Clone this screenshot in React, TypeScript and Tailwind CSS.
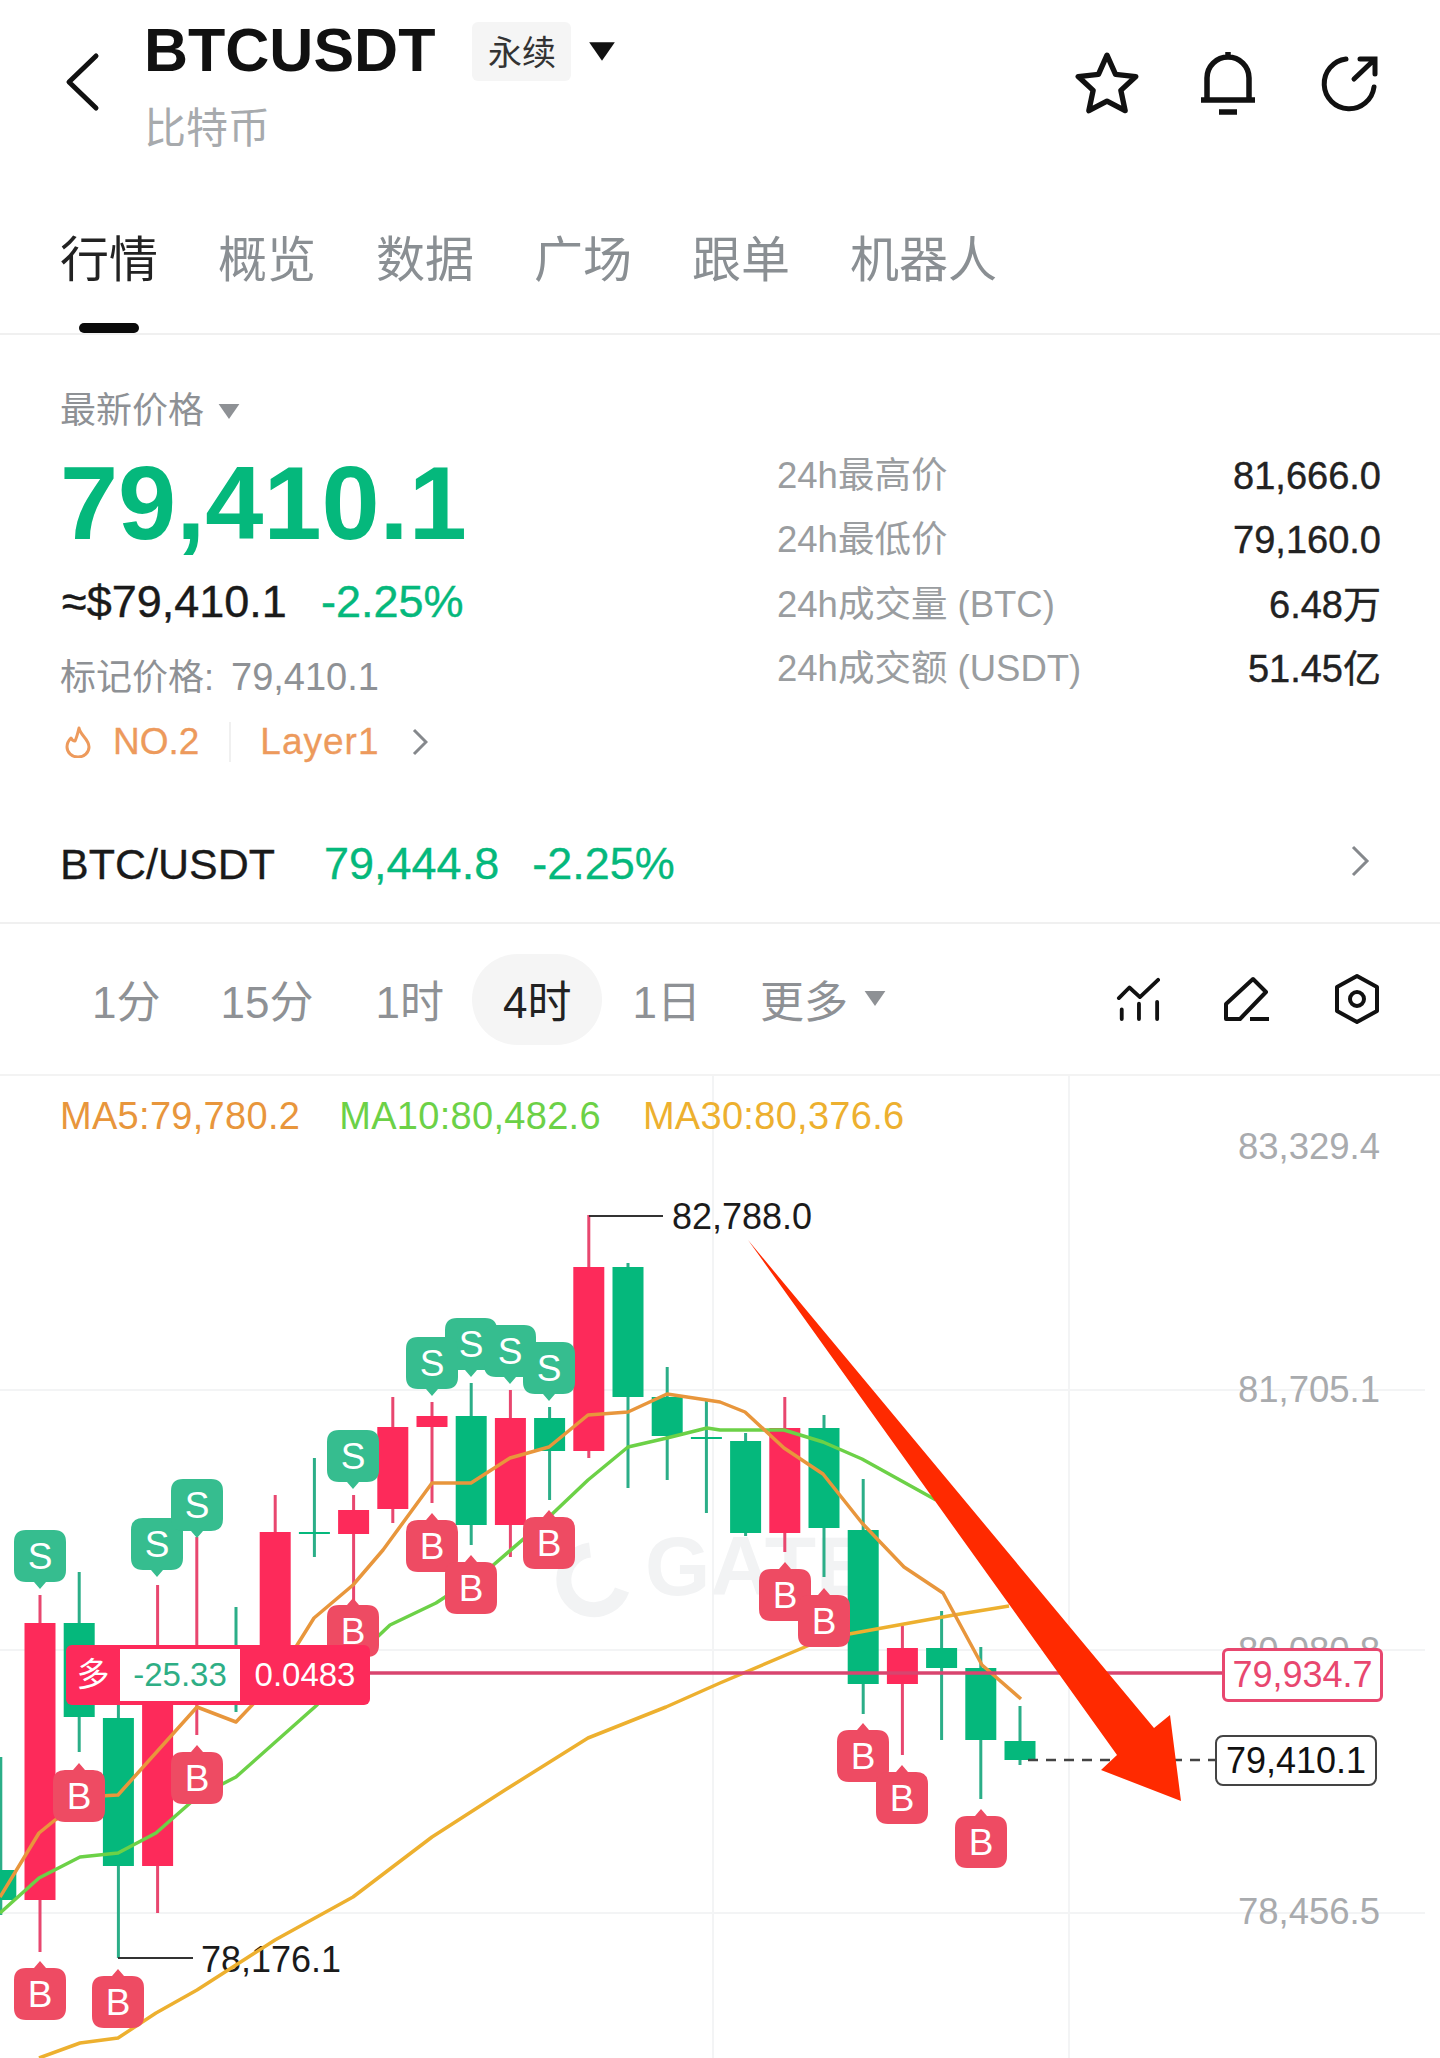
import React from 'react'

const GREEN = '#05B87C'
const RED = '#FD2A5A'
const WICK_GREEN = '#2BAE88'
const WICK_RED = '#E8476F'

// x = 40 + 39.2 * i, all y in page pixels
type Candle = { i: number; up: boolean; top: number; bottom: number; high: number; low: number }
const candles: Candle[] = [
  { i: -1, up: false, top: 1870, bottom: 1900, high: 1757, low: 1915 },
  { i: 0, up: true, top: 1623, bottom: 1900, high: 1595, low: 1952 },
  { i: 1, up: false, top: 1623, bottom: 1717, high: 1572, low: 1752 },
  { i: 2, up: false, top: 1718, bottom: 1866, high: 1660, low: 1958 },
  { i: 3, up: true, top: 1680, bottom: 1866, high: 1585, low: 1913 },
  { i: 4, up: true, top: 1660, bottom: 1690, high: 1537, low: 1735 },
  { i: 5, up: false, top: 1660, bottom: 1680, high: 1607, low: 1712 },
  { i: 6, up: true, top: 1532, bottom: 1680, high: 1495, low: 1690 },
  { i: 7, up: false, top: 1532, bottom: 1534, high: 1458, low: 1557 },
  { i: 8, up: true, top: 1510, bottom: 1534, high: 1495, low: 1603 },
  { i: 9, up: true, top: 1427, bottom: 1509, high: 1397, low: 1523 },
  { i: 10, up: true, top: 1416, bottom: 1427, high: 1402, low: 1503 },
  { i: 11, up: false, top: 1416, bottom: 1525, high: 1383, low: 1545 },
  { i: 12, up: true, top: 1418, bottom: 1525, high: 1390, low: 1557 },
  { i: 13, up: false, top: 1418, bottom: 1451, high: 1407, low: 1500 },
  { i: 14, up: true, top: 1267, bottom: 1451, high: 1215, low: 1458 },
  { i: 15, up: false, top: 1267, bottom: 1397, high: 1263, low: 1488 },
  { i: 16, up: false, top: 1397, bottom: 1436, high: 1367, low: 1480 },
  { i: 17, up: false, top: 1437, bottom: 1439, high: 1400, low: 1513 },
  { i: 18, up: false, top: 1441, bottom: 1533, high: 1433, low: 1536 },
  { i: 19, up: true, top: 1428, bottom: 1533, high: 1397, low: 1552 },
  { i: 20, up: false, top: 1428, bottom: 1528, high: 1415, low: 1577 },
  { i: 21, up: false, top: 1530, bottom: 1684, high: 1479, low: 1714 },
  { i: 22, up: true, top: 1648, bottom: 1684, high: 1626, low: 1755 },
  { i: 23, up: false, top: 1648, bottom: 1668, high: 1611, low: 1740 },
  { i: 24, up: false, top: 1668, bottom: 1740, high: 1647, low: 1799 },
  { i: 25, up: false, top: 1741, bottom: 1760, high: 1706, low: 1765 },
]

const sellTags = [
  { x: 40, top: 1530 },
  { x: 157, top: 1518 },
  { x: 197, top: 1479 },
  { x: 353, top: 1430 },
  { x: 471, top: 1318 },
  { x: 510, top: 1325 },
  { x: 432, top: 1337 },
  { x: 549, top: 1342 },
]

const buyTags = [
  { x: 40, top: 1968 },
  { x: 79, top: 1770 },
  { x: 118, top: 1976 },
  { x: 197, top: 1752 },
  { x: 353, top: 1605 },
  { x: 432, top: 1520 },
  { x: 471, top: 1562 },
  { x: 549, top: 1517 },
  { x: 785, top: 1569 },
  { x: 824, top: 1595 },
  { x: 863, top: 1730 },
  { x: 902, top: 1772 },
  { x: 981, top: 1816 },
]

const ma5 = '0,1897 39,1833 55,1820 100,1796 118,1795 197,1707 236,1722 257,1700 294,1650 314,1618 353,1585 383,1550 432,1483 471,1483 510,1458 549,1447 588,1415 628,1412 667,1394 707,1400 720,1402 745,1412 784,1448 823,1474 862,1523 904,1567 943,1593 982,1665 1021,1699'
const ma10 = '0,1913 39,1878 80,1857 118,1853 156,1833 197,1797 236,1777 317,1705 353,1660 390,1625 436,1603 491,1567 549,1517 588,1480 628,1447 667,1438 707,1428 720,1430 784,1430 823,1442 862,1459 936,1500'
const ma30 = '39,2058 80,2043 118,2038 156,2013 197,1990 275,1940 353,1897 432,1837 505,1790 588,1738 666,1707 720,1683 812,1644 849,1634 904,1624 954,1615 1009,1606'

function Tag({ x, top, kind }: { x: number; top: number; kind: 'S' | 'B' }) {
  const l = x - 26
  const r = x + 26
  const b = top + 52
  const d =
    kind === 'S'
      ? `M${l + 12} ${top} H${r - 12} Q${r} ${top} ${r} ${top + 12} V${b - 12} Q${r} ${b} ${r - 12} ${b} H${x + 6} L${x} ${b + 7} L${x - 6} ${b} H${l + 12} Q${l} ${b} ${l} ${b - 12} V${top + 12} Q${l} ${top} ${l + 12} ${top} Z`
      : `M${l + 12} ${top} H${x - 6} L${x} ${top - 7} L${x + 6} ${top} H${r - 12} Q${r} ${top} ${r} ${top + 12} V${b - 12} Q${r} ${b} ${r - 12} ${b} H${l + 12} Q${l} ${b} ${l} ${b - 12} V${top + 12} Q${l} ${top} ${l + 12} ${top} Z`
  return (
    <g>
      <path d={d} fill={kind === 'S' ? '#36BD8F' : '#EE4B63'} />
      <text x={x} y={top + 39} fontSize="37" fill="#fff" textAnchor="middle">
        {kind}
      </text>
    </g>
  )
}

function Triangle({ className }: { className: string }) {
  return (
    <svg viewBox="0 0 24 18" className={className}>
      <path d="M1 1 H23 L12 17 Z" fill="currentColor" />
    </svg>
  )
}

function Chart() {
  return (
    <svg viewBox="0 1076 1440 982" className="absolute inset-0 w-full h-full">
      {/* grid */}
      <g stroke="#F3F4F5" strokeWidth="2">
        <path d="M713 1076 V2058 M1069 1076 V2058" />
        <path d="M0 1390 H1425 M0 1650 H1425 M0 1913 H1425" />
      </g>

      {/* watermark */}
      <path d="M590 1550 A30 30 0 1 0 622 1590" fill="none" stroke="#F2F3F4" strokeWidth="15" />
      <text x="645" y="1595" fontSize="84" fontWeight="700" fill="#F2F3F4">
        GATE
      </text>

      {/* axis */}
      <g fontSize="36.5" fill="#A9ABAE" textAnchor="end">
        <text x="1380" y="1159">83,329.4</text>
        <text x="1380" y="1402">81,705.1</text>
        <text x="1380" y="1663">80,080.8</text>
        <text x="1380" y="1924">78,456.5</text>
      </g>

      {/* candles */}
      {candles.map((c) => {
        const x = 40 + 39.2 * c.i
        return (
          <g key={c.i}>
            <rect x={x - 1.5} y={c.high} width="3" height={c.low - c.high} fill={c.up ? WICK_RED : WICK_GREEN} />
            <rect x={x - 15.5} y={c.top} width="31" height={c.bottom - c.top} fill={c.up ? RED : GREEN} />
          </g>
        )
      })}

      {/* high / low markers */}
      <path d="M589 1216 H663" stroke="#333" strokeWidth="2" fill="none" />
      <path d="M118 1958 H193" stroke="#333" strokeWidth="2" fill="none" />
      <text x="672" y="1229" fontSize="36" fill="#1B1B1B">82,788.0</text>
      <text x="201" y="1972" fontSize="36" fill="#1B1B1B">78,176.1</text>

      {/* moving averages */}
      <g fill="none" strokeWidth="3.5" strokeLinejoin="round">
        <polyline points={ma30} stroke="#EDB02F" />
        <polyline points={ma10} stroke="#6CD147" />
        <polyline points={ma5} stroke="#E8963C" />
      </g>

      {sellTags.map((t) => (
        <Tag key={t.x} x={t.x} top={t.top} kind="S" />
      ))}
      {buyTags.map((t) => (
        <Tag key={t.x} x={t.x} top={t.top} kind="B" />
      ))}

      {/* position + last price lines */}
      <path d="M369 1673 H1222" stroke="#D8456F" strokeWidth="3.5" />
      <path d="M1028 1760 H1215" stroke="#444" strokeWidth="2.5" strokeDasharray="10 8" />

      {/* arrow annotation */}
      <polygon points="748,1240 1154,1728 1170,1715 1181,1801 1101,1770 1117,1755" fill="#FF2A00" />
    </svg>
  )
}

export default function App() {
  return (
    <div
      className="w-[1440px] h-[2058px] overflow-hidden bg-white text-[#222]"
      style={{ fontFamily: '"Liberation Sans", "Noto Sans CJK SC", sans-serif' }}
    >
      {/* top bar */}
      <header className="h-[180px] flex items-start">
        <svg viewBox="0 0 36 60" className="w-[36px] h-[60px] mt-[52px] ml-[64px] shrink-0">
          <path d="M32 4 L5 30 L32 56" fill="none" stroke="#111" strokeWidth="5" strokeLinecap="round" strokeLinejoin="round" />
        </svg>
        <div className="ml-[44px] mt-[20px]">
          <div className="flex items-start">
            <span className="text-[61px] leading-[60px] font-bold text-[#111]">BTCUSDT</span>
            <span className="ml-[37px] mt-[2px] w-[99px] h-[59px] rounded-[6px] bg-[#F5F5F5] text-[34px] leading-[62px] text-center text-[#333]">
              永续
            </span>
            <Triangle className="w-[28px] h-[21px] ml-[17px] mt-[21px] text-[#111]" />
          </div>
          <div className="text-[42px] leading-[50px] mt-[23px] text-[#A7AAAD]">比特币</div>
        </div>
        <div className="ml-auto mr-[61px] mt-[52px] flex gap-[60px]">
          <svg viewBox="0 0 60 60" className="w-[64px] h-[64px]">
            <path
              d="M30 3 L38 21 L57 23 L43 36 L47 55 L30 46 L13 55 L17 36 L3 23 L22 21 Z"
              fill="none"
              stroke="#111"
              strokeWidth="5"
              strokeLinejoin="round"
            />
          </svg>
          <svg viewBox="0 0 60 64" className="w-[60px] h-[64px] -ml-[1px]">
            <path
              d="M9 47 V26 A21 21 0 0 1 51 26 V47 M3 48 H57 M30 0 V6 M21 60 H39"
              fill="none"
              stroke="#111"
              strokeWidth="5.5"
            />
          </svg>
          <svg viewBox="0 0 60 60" className="w-[60px] h-[60px] ml-[1px] mt-[2px]">
            <path
              d="M27 5 A25 25 0 1 0 55 33 M35 25 L55 6 M41 5 H56 V20"
              fill="none"
              stroke="#111"
              strokeWidth="5"
              strokeLinecap="round"
            />
          </svg>
        </div>
      </header>

      {/* tabs */}
      <nav className="h-[155px] border-b-2 border-[#F0F0F0] relative flex pl-[60px] gap-[60px] pt-[51px] text-[49px] leading-[58px] text-[#8A8F93]">
        <span className="text-[#222]">行情</span>
        <span>概览</span>
        <span>数据</span>
        <span>广场</span>
        <span>跟单</span>
        <span>机器人</span>
        <div className="absolute left-[79px] bottom-0 w-[60px] h-[10px] rounded-[5px] bg-[#0A0A0A]" />
      </nav>

      {/* price block */}
      <section className="flex h-[430px]">
        <div className="w-[717px] pl-[60px] pt-[54px]">
          <div className="flex items-center text-[36px] leading-[44px] text-[#8E9195]">
            最新价格
            <Triangle className="w-[24px] h-[17px] ml-[13px] text-[#8E9195]" />
          </div>
          <div className="mt-[18px] text-[104.5px] leading-[104px] font-bold" style={{ color: GREEN }}>
            79,410.1
          </div>
          <div className="mt-[21px] flex text-[45px] leading-[52px] [-webkit-text-stroke:0.4px]">
            <span className="ml-[2px] text-[#1A1A1A]">≈$79,410.1</span>
            <span className="ml-[34px]" style={{ color: GREEN }}>
              -2.25%
            </span>
          </div>
          <div className="mt-[27px] flex items-baseline text-[36px] leading-[44px] text-[#8E9195]">
            标记价格:
            <span className="ml-[17px] text-[38px]">79,410.1</span>
          </div>
          <div className="mt-[20px] h-[44px] flex items-center text-[37px] text-[#ED9A5C] [-webkit-text-stroke:0.3px]">
            <svg viewBox="0 0 28 32" className="w-[28px] h-[32px] ml-[4px]">
              <path
                d="M15 2 C16 9 25 13 25 21 A11 10 0 0 1 3 21 C3 17 5 14 7 12 C8 14 9 15 11 15 C13 11 14 6 15 2 Z"
                fill="none"
                stroke="#ED9A5C"
                strokeWidth="3"
                strokeLinejoin="round"
              />
            </svg>
            <span className="ml-[21px]">NO.2</span>
            <span className="ml-[30px] w-[2px] h-[40px] bg-[#F0F0F0]" />
            <span className="ml-[29px] tracking-[1px]">Layer1</span>
            <svg viewBox="0 0 16 28" className="w-[16px] h-[28px] ml-[32px]">
              <path d="M2 2 L14 14 L2 26" fill="none" stroke="#85888C" strokeWidth="3" />
            </svg>
          </div>
        </div>
        <div className="pt-[109px] w-[604px] ml-[60px] flex flex-col text-[36.5px] leading-[64.4px]">
          {[
            ['24h最高价', '81,666.0'],
            ['24h最低价', '79,160.0'],
            ['24h成交量 (BTC)', '6.48万'],
            ['24h成交额 (USDT)', '51.45亿'],
          ].map(([label, value]) => (
            <div key={label} className="flex justify-between">
              <span className="text-[#9A9DA0]">{label}</span>
              <span className="text-[38px] text-[#222] [-webkit-text-stroke:0.4px]">{value}</span>
            </div>
          ))}
        </div>
      </section>

      {/* spot row */}
      <section className="h-[159px] border-b-2 border-[#F0F0F0] flex items-start pt-[69px] pl-[60px] pr-[70px] leading-[60px] [-webkit-text-stroke:0.3px]">
        <span className="text-[43px] text-[#1A1A1A]">BTC/USDT</span>
        <span className="ml-[49px] text-[45px]" style={{ color: GREEN }}>79,444.8</span>
        <span className="ml-[33px] text-[45px]" style={{ color: GREEN }}>-2.25%</span>
        <svg viewBox="0 0 20 32" className="w-[20px] h-[32px] ml-auto mt-[11px]">
          <path d="M3 2 L17 16 L3 30" fill="none" stroke="#85888C" strokeWidth="3" />
        </svg>
      </section>

      {/* interval row */}
      <section className="h-[152px] border-b-2 border-[#F3F3F3] flex items-center pl-[92px] pr-[60px] text-[44px] text-[#8E9195]">
        <span className="mt-[7px]">1分</span>
        <span className="ml-[60px] mt-[7px]">15分</span>
        <span className="ml-[62px] mt-[7px]">1时</span>
        <span className="ml-[28px] px-[31px] h-[91px] leading-[98px] rounded-full bg-[#F5F5F5] text-[#222]">4时</span>
        <span className="ml-[30px] mt-[7px]">1日</span>
        <span className="ml-[59px] mt-[7px]">更多</span>
        <Triangle className="w-[24px] h-[17px] ml-[15px] -mt-[2px] text-[#8E9195]" />
        <div className="ml-auto flex items-center gap-[63px]">
          <svg viewBox="0 0 46 46" className="w-[44px] h-[44px]">
            <path
              d="M3 22 L14 11 L25 21 L44 3 M6 34 V44 M24 28 V44 M43 26 V44"
              fill="none"
              stroke="#111"
              strokeWidth="4"
              strokeLinecap="round"
              strokeLinejoin="round"
            />
          </svg>
          <svg viewBox="0 0 48 46" className="w-[48px] h-[46px]">
            <path
              d="M3 43 V28 L30 3 L43 16 L17 43 Z M27 43 H46"
              fill="none"
              stroke="#111"
              strokeWidth="4"
              strokeLinejoin="round"
            />
          </svg>
          <svg viewBox="0 0 46 52" className="w-[46px] h-[52px]">
            <path d="M23 3 L43 14 V38 L23 49 L3 38 V14 Z" fill="none" stroke="#111" strokeWidth="4" strokeLinejoin="round" />
            <circle cx="23" cy="26" r="7" fill="none" stroke="#111" strokeWidth="4" />
          </svg>
        </div>
      </section>

      {/* chart */}
      <section className="relative h-[982px] overflow-hidden">
        <Chart />
        <div className="relative flex pt-[20px] pl-[60px] text-[38px] leading-[40px] tracking-[0.3px]">
          <span className="text-[#E8963C]">MA5:79,780.2</span>
          <span className="ml-[39px] text-[#6CD147]">MA10:80,482.6</span>
          <span className="ml-[42px] text-[#EDB02F]">MA30:80,376.6</span>
        </div>

        {/* open position label */}
        <div className="absolute left-[66px] top-[569px] w-[304px] h-[60px] rounded-[6px] bg-[#FD2A5A] flex items-center text-[33px] leading-[52px] text-white">
          <span className="w-[54px] text-center">多</span>
          <span className="w-[120px] h-[52px] bg-white text-center text-[#2EAE85]">-25.33</span>
          <span className="w-[130px] text-center">0.0483</span>
        </div>

        {/* price tags on the axis */}
        <div className="absolute left-[1222px] top-[572px] w-[161px] h-[54px] rounded-[6px] border-[3px] border-[#E8476F] bg-white text-center text-[36px] leading-[48px] text-[#E8476F]">
          79,934.7
        </div>
        <div className="absolute left-[1215px] top-[659px] w-[162px] h-[51px] rounded-[8px] border-2 border-[#444] bg-white text-center text-[36px] leading-[47px] text-[#111]">
          79,410.1
        </div>
      </section>
    </div>
  )
}
